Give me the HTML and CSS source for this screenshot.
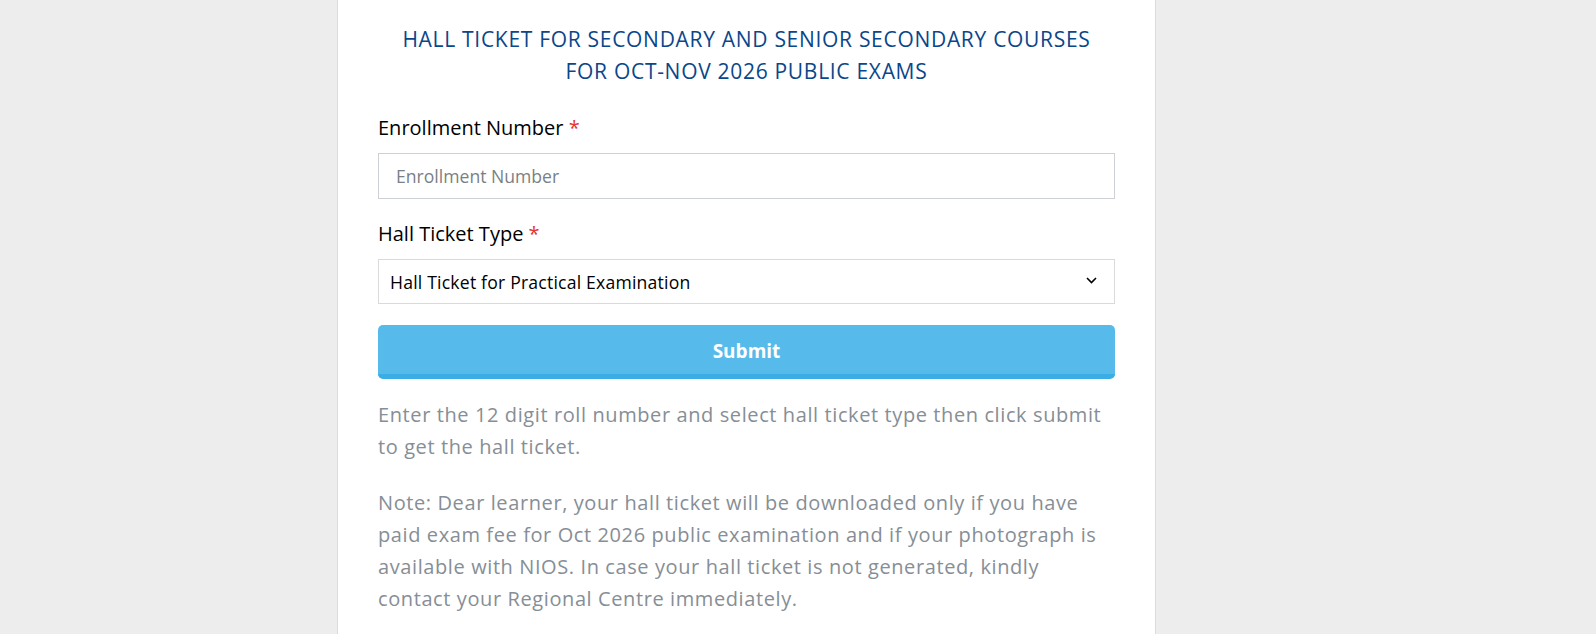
FILE: index.html
```html
<!DOCTYPE html>
<html lang="en">
<head>
    <meta charset="UTF-8">
    <meta name="viewport" content="width=device-width, initial-scale=1.0">
    <title>Hall Ticket - NIOS</title>
    <link rel="stylesheet" href="styles.css">
</head>
<body>
    <div class="page">
        <main class="card">
            <h1 class="title">HALL TICKET FOR SECONDARY AND SENIOR SECONDARY COURSES<br>FOR OCT-NOV 2026 PUBLIC EXAMS</h1>

            <form class="ticket-form" onsubmit="return false;">
                <div class="form-group">
                    <label for="enrollment">Enrollment Number <span class="req">*</span></label>
                    <input type="text" id="enrollment" class="form-input" placeholder="Enrollment Number">
                </div>

                <div class="form-group">
                    <label for="ticketType">Hall Ticket Type <span class="req">*</span></label>
                    <div class="select-wrap">
                        <select id="ticketType" class="form-select">
                            <option>Hall Ticket for Practical Examination</option>
                            <option>Hall Ticket for Theory Examination</option>
                        </select>
                        <!-- custom arrow -->
                        <svg class="select-arrow" width="11" height="7" viewBox="0 0 11 7">
                            <path d="M1 1l4.5 4.5L10 1" fill="none" stroke="#000" stroke-width="1.6"/>
                        </svg>
                    </div>
                </div>

                <button type="submit" class="submit-btn">Submit</button>
            </form>

            <p class="help">Enter the 12 digit roll number and select hall ticket type then click submit to get the hall ticket.</p>
            <p class="help">Note: Dear learner, your hall ticket will be downloaded only if you have paid exam fee for Oct 2026 public examination and if your photograph is available with NIOS. In case your hall ticket is not generated, kindly contact your Regional Centre immediately.</p>
        </main>
    </div>
</body>
</html>
```

FILE: styles.css
```css
:root {
    --page-bg: #ededed;
    --card-border: #dcdcdc;
    --title-color: #0a468a;
    --muted: #868e96;
    --btn-color: #56bbea;
    --btn-shadow: #3aaee4;
    --req-color: #e3342f;
}

* {
    box-sizing: border-box;
}

body {
    margin: 0;
    font-family: 'Open Sans', 'Noto Sans', sans-serif;
    background-color: var(--page-bg);
    color: #000;
}

.page {
    display: grid;
    grid-template-columns: 337px 819px 1fr;
    min-height: 100vh;
}

.card {
    grid-column: 2;
    background-color: #fff;
    border-left: 1px solid var(--card-border);
    border-right: 1px solid var(--card-border);
    padding: 23px 40px 0;
}

.title {
    margin: 0 0 25px;
    font-size: 21px;
    font-weight: 400;
    line-height: 32px;
    letter-spacing: 0.7px;
    text-align: center;
    color: var(--title-color);
}

.form-group {
    margin-bottom: 19px;
}

.form-group label {
    display: block;
    font-size: 20px;
    line-height: 32px;
    margin-bottom: 9px;
}

.req {
    color: var(--req-color);
}

.form-input {
    display: block;
    width: 100%;
    height: 46px;
    padding: 0 17px;
    border: 1px solid #cdd1d6;
    font-family: inherit;
    font-size: 17.6px;
    color: #000;
    outline: none;
}

.form-input::placeholder {
    color: #7a7f85;
}

.select-wrap {
    position: relative;
}

.form-select {
    display: block;
    width: 100%;
    height: 45px;
    padding: 0 40px 0 11px;
    border: 1px solid #dadada;
    border-radius: 0;
    background-color: #fff;
    font-family: inherit;
    font-size: 17.6px;
    letter-spacing: 0.2px;
    color: #000;
    appearance: none;
    -webkit-appearance: none;
}

.select-arrow {
    position: absolute;
    right: 18px;
    top: 18px;
    pointer-events: none;
}

.submit-btn {
    display: block;
    width: 100%;
    height: 54px;
    margin-top: 21px;
    padding-top: 4px;
    border: none;
    border-bottom: 5px solid var(--btn-shadow);
    border-radius: 5px;
    background-color: var(--btn-color);
    color: #fff;
    font-family: inherit;
    font-size: 19px;
    font-weight: 700;
    cursor: pointer;
}

.help {
    margin: 20px 0 24px;
    font-size: 20px;
    line-height: 32px;
    letter-spacing: 0.6px;
    color: var(--muted);
}

.help + .help {
    margin-top: 0;
}
```
